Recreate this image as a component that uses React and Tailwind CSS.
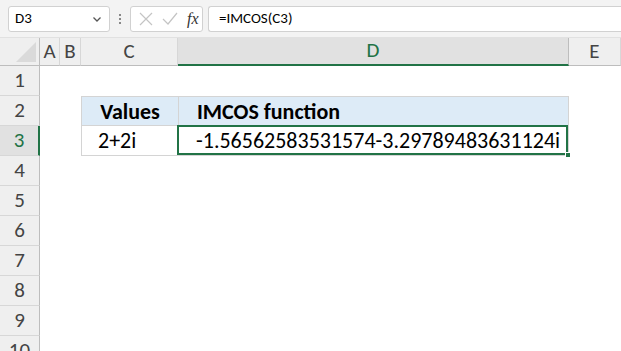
import React from 'react';

const cols = [
  { id: 'A', w: 20 },
  { id: 'B', w: 21 },
  { id: 'C', w: 97 },
  { id: 'D', w: 391 },
  { id: 'E', w: 52 },
];

const rows = [1, 2, 3, 4, 5, 6, 7, 8, 9, 10];

function Cell({ r, c }) {
  // table lives in C2:D3
  if (r === 2 && c === 'C')
    return <div className="h-full bg-[#ddebf7] border-l border-t border-b border-[#d4d4d4] flex items-center justify-center font-bold text-[22px] text-black">Values</div>;
  if (r === 2 && c === 'D')
    return <div className="h-full bg-[#ddebf7] border-l border-r border-t border-b border-[#d4d4d4] flex items-center pl-[18px] font-bold text-[22px] text-black">IMCOS function</div>;
  if (r === 3 && c === 'C')
    return <div className="h-full border-l border-b border-[#d4d4d4] flex items-center pl-[16px] text-[22px] text-black">2+2i</div>;
  if (r === 3 && c === 'D')
    return (
      <div className="h-full relative border-b border-r border-[#d4d4d4]">
        <div className="absolute -left-[1px] -top-[1px] right-0 bottom-0 border-2 border-[#217346] flex items-center pl-[17px] text-[22px] text-black whitespace-nowrap">
          -1.56562583531574-3.29789483631124i
        </div>
        <div className="absolute -right-[3px] -bottom-[3px] w-[6px] h-[6px] bg-[#217346] border border-white" />
      </div>
    );
  return <div className="h-full" />;
}

export default function App() {
  return (
    <div className="w-[621px] h-[351px] overflow-hidden bg-white font-['Calibri','Carlito','Liberation_Sans',sans-serif]">
      {/* formula bar */}
      <div className="h-[38px] bg-[#f3f3f3] flex items-center pl-[8px] border-b border-[#e1e1e1]">
        <div className="w-[102px] h-[26px] bg-white border border-[#d1d1d1] rounded-[3px] flex items-center justify-between px-[6px] text-[15px] text-black">
          <span>D3</span>
          <svg width="12" height="12" viewBox="0 0 12 12" fill="none" stroke="#555" strokeWidth="1.3"><path d="M2.5 4.5 6 8l3.5-3.5" /></svg>
        </div>
        <div className="w-[20px] flex flex-col items-center gap-[2px]">
          <span className="w-[2px] h-[2px] bg-[#888]" />
          <span className="w-[2px] h-[2px] bg-[#888]" />
          <span className="w-[2px] h-[2px] bg-[#888]" />
        </div>
        <div className="w-[73px] h-[26px] bg-white border border-[#d1d1d1] rounded-[3px] flex items-center pl-[8px] gap-[9px]">
          <svg width="14" height="14" viewBox="0 0 14 14" stroke="#c4c4c4" strokeWidth="1.2"><path d="M1 1l12 12M13 1L1 13" /></svg>
          <svg width="16" height="14" viewBox="0 0 16 14" fill="none" stroke="#c4c4c4" strokeWidth="1.2"><path d="M1 7l5 5L15 1" /></svg>
          <span className="font-['Liberation_Serif',serif] italic text-[16px] text-[#333] leading-none">fx</span>
        </div>
        <div className="ml-[5px] flex-1 h-[26px] bg-white border border-[#d1d1d1] border-r-0 rounded-l-[3px] flex items-center pl-[10px] text-[15px] text-black">
          =IMCOS(C3)
        </div>
      </div>

      {/* grid */}
      <div className="grid grid-cols-[40px_20px_21px_97px_391px_52px] grid-rows-[28px_repeat(10,30px)]">
        <div className="bg-[#efefef] border-r border-b border-[#bdbdbd] relative">
          <div className="absolute right-[3px] bottom-[3px] w-0 h-0 border-l-[20px] border-l-transparent border-b-[20px] border-b-[#dadada]" />
        </div>
        {cols.map((c) =>
          c.id === 'D' ? (
            <div key={c.id} className="bg-[#e1e1e1] border-r border-[#bdbdbd] border-b-2 border-b-[#217346] flex items-center justify-center text-[21px] text-[#217346]">{c.id}</div>
          ) : (
            <div key={c.id} className="bg-[#efefef] border-r border-b border-[#d7d7d7] border-b-[#bdbdbd] flex items-center justify-center text-[21px] text-[#444]">{c.id}</div>
          )
        )}
        {rows.map((r) => (
          <React.Fragment key={r}>
            {r === 3 ? (
              <div className="bg-[#e1e1e1] border-r-2 border-r-[#217346] border-b border-b-[#d7d7d7] flex items-center justify-center text-[21px] text-[#217346]">{r}</div>
            ) : (
              <div className="bg-[#efefef] border-r border-r-[#bdbdbd] border-b border-b-[#d7d7d7] flex items-center justify-center text-[21px] text-[#444]">{r}</div>
            )}
            {cols.map((c) => (
              <Cell key={c.id} r={r} c={c.id} />
            ))}
          </React.Fragment>
        ))}
      </div>
    </div>
  );
}
